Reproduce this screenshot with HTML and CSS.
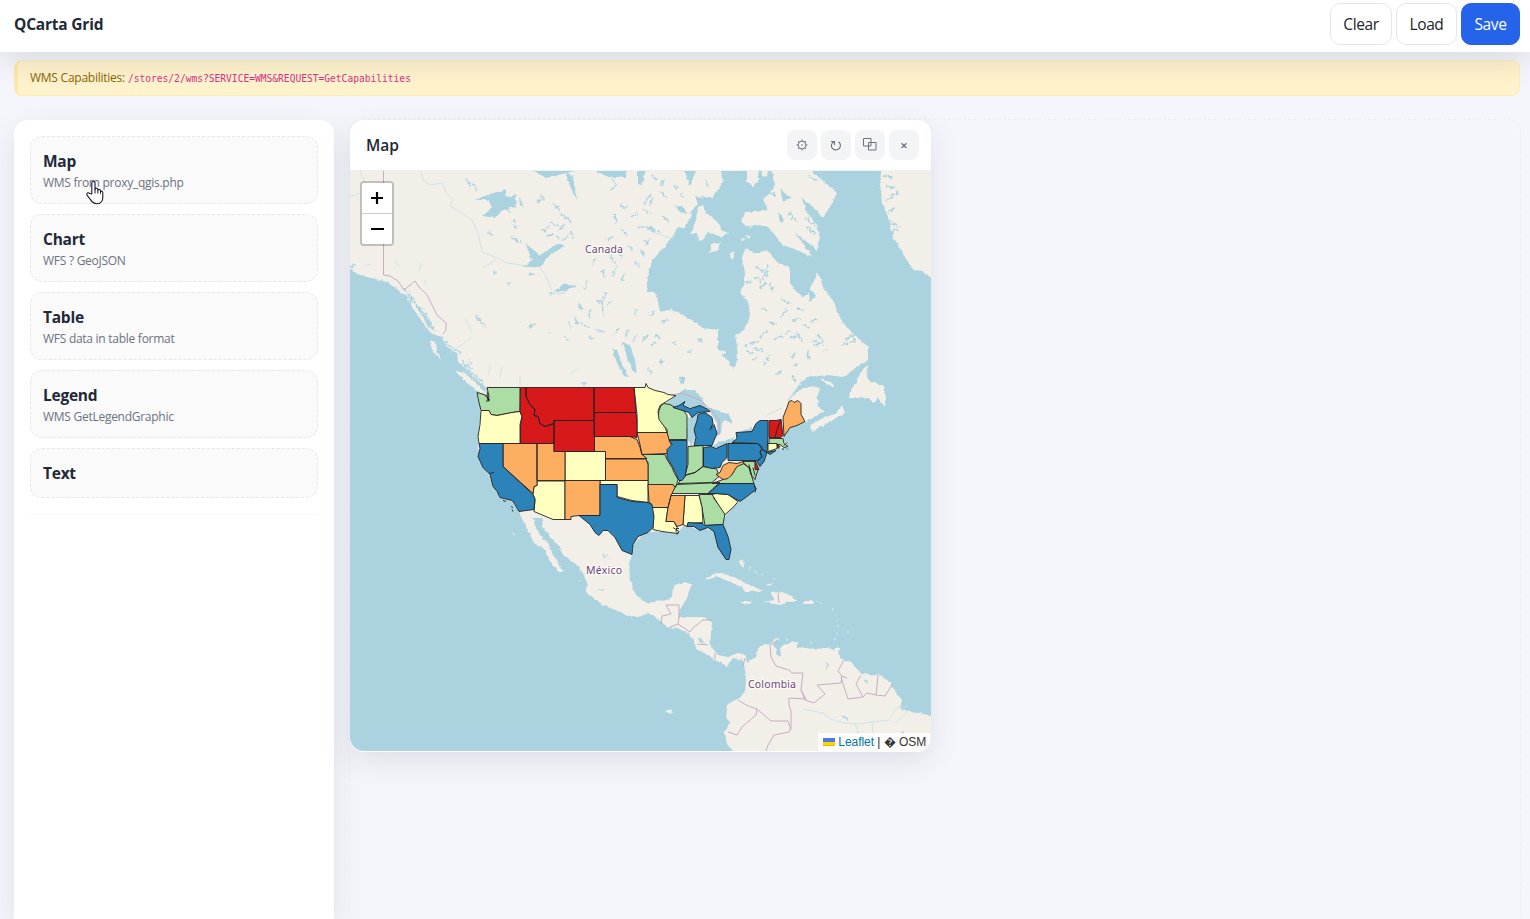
FILE: index.html
```html
<!DOCTYPE html>
<html lang="en">
<head>
<meta charset="utf-8">
<title>QCarta Grid</title>
<link rel="stylesheet" href="styles.css">
</head>
<body>
<header class="topbar">
  <h1 class="brand">QCarta Grid</h1>
  <div class="actions">
    <button class="btn btn-clear">Clear</button>
    <button class="btn btn-load">Load</button>
    <button class="btn btn-save">Save</button>
  </div>
</header>
<div class="notice"><span class="notice-label">WMS Capabilities:</span><code>/stores/2/wms?SERVICE=WMS&amp;REQUEST=GetCapabilities</code></div>
<main class="layout">
  <aside class="sidebar">
    <div class="tool"><b>Map</b><small>WMS from proxy_qgis.php</small>
      <svg class="cursor" width="20" height="26" viewBox="0 0 20 26"><path d="M6.8 14V3.2c0-2.3 3.2-2.3 3.2 0v6.1c.4-1.7 2.8-1.4 2.8.3v.8c.5-1.5 2.7-1.2 2.7.4v1c.6-1.2 2.3-.7 2.3.7v4.8c0 3.8-2.2 6.4-5.9 6.4-3.4 0-4.900-1.500-6.600-4.300L2 15.100c-1-1.800 1.100-3.100 2.500-1.600z" fill="#fff" stroke="#1b1b2b" stroke-width="1.1" stroke-linejoin="round"/><path d="M10 9v4.500M12.800 10.300v3.200M15.500 11.300v2.500" stroke="#1b1b2b" fill="none"/></svg>
    </div>
    <div class="tool"><b>Chart</b><small>WFS ? GeoJSON</small></div>
    <div class="tool"><b>Table</b><small>WFS data in table format</small></div>
    <div class="tool"><b>Legend</b><small>WMS GetLegendGraphic</small></div>
    <div class="tool"><b>Text</b></div>
    <hr class="rule">
  </aside>
  <section class="canvas">
    <article class="widget">
      <div class="widget-head">
        <h2>Map</h2>
        <div class="tools">
          <button class="icon"><svg width="14" height="14" viewBox="0 0 14 14" fill="none" stroke="#6b7280"><circle cx="7" cy="7" r="3.900"/><circle cx="7" cy="7" r=".4"/><path d="M7 1.500v1.600M7 10.900v1.600M1.500 7h1.600M10.900 7h1.600M3.100 3.100l1.100 1.100M9.800 9.800l1.100 1.100M3.100 10.900l1.100-1.100M9.800 4.200l1.100-1.100"/></svg></button>
          <button class="icon"><svg width="14" height="14" viewBox="0 0 14 14" fill="none" stroke="#6b7280" stroke-width="1.100"><path d="M2 3.500h3.500V7M5.200 3.700C2.500 5 1.700 7.500 2.900 9.700c1.500 2.700 5.500 3 7.500.6 1.600-2 1.300-5-.9-6.600"/></svg></button>
          <button class="icon"><svg width="14" height="14" viewBox="0 0 14 14" fill="none" stroke="#6b7280"><path d="M.5.500h7.500v7.500H.5zM5.500 4.500h7.500v7.500h-7.500z"/></svg></button>
          <button class="icon"><svg width="14" height="14" viewBox="0 0 14 14" fill="none" stroke="#6b7280" stroke-width="1.200"><path d="M4.500 5.200l5 4.800M9.500 5.200l-5 4.800"/></svg></button>
        </div>
      </div>
      <div class="map">
        <svg class="map-art" viewBox="350 171 581 580" width="581" height="580">
          <defs>
            <filter id="coast" filterUnits="userSpaceOnUse" x="340" y="160" width="601" height="601" color-interpolation-filters="sRGB">
              <feTurbulence type="fractalNoise" baseFrequency=".22" numOctaves="3" seed="4" result="n"/>
              <feDisplacementMap in="SourceGraphic" in2="n" scale="3.500" xChannelSelector="R" yChannelSelector="G"/>
            </filter>
            <filter id="jag" filterUnits="userSpaceOnUse" x="340" y="160" width="601" height="601" color-interpolation-filters="sRGB">
              <feTurbulence type="fractalNoise" baseFrequency=".3" numOctaves="3" seed="9" result="n"/>
              <feDisplacementMap in="SourceGraphic" in2="n" scale="6" xChannelSelector="R" yChannelSelector="G"/>
            </filter>
          </defs>
          <rect class="water" x="350" y="170" width="581" height="582"/>
          <g filter="url(#coast)">
            <!-- mainland -->
            <path class="land" d="M340 160V266L350 269 357 274 367 277 387 282 398 290 407 297 413 309 418 315 423 323 430 333 442 337 445 345 457 353 458 362 467 370 473 377 483 385 488 389 481 395 481 411 478 437 479 457 483 468 490 475 493 487 500 498 512 501 519 512 525 525 530 535 534 543 545 550 550 562 560 573 563 571 558 563 552 553 548 543 540 535 535 525 533 518 542 518 543 527 550 537 558 545 563 555 575 563 583 573 587 583 586 592 595 600 610 608 627 615 638 617 648 613 657 618 667 627 677 628 687 632 693 640 698 650 710 656 715 660 727 666 733 658 743 660 745 670 746 680 745 692 738 699 728 703 726 717 730 723 724 733 727 743 733 751V760H940V718L931 716 920 713 910 712 900 708 902 700 893 688 890 682 880 675 862 674 850 662 840 658 837 650 825 648 813 649 798 647 797 642 788 643 783 645 780 649 781 654 779 657 776 654 777 648 772 645 781 638 775 639 770 644 760 646 755 657 748 662 745 655 738 653 728 657 718 655 710 645 712 622 703 617 690 617 679 617 680 610 687 598 692 583 680 583 673 587 672 597 667 600 647 603 637 597 630 580 629 563 632 555 633 545 640 537 650 532 662 532 678 533 683 526 697 528 708 530 715 530 717 542 723 555 729 560 730 548 725 535 722 523 727 513 737 502 747 497 755 490 754 483 750 475 754 470 756 463 763 457 765 452 773 450 787 447 783 438 785 430 793 425 805 422 818 415 823 412 818 405 817 397 820 388 813 386 800 390 788 400 795 390 807 377 827 375 843 377 857 367 868 360 868 347 853 333 842 322 837 310 832 298 823 287 818 272 813 283 810 292 803 297 795 290 790 283 790 268 778 263 767 250 757 253 745 249 742 257 745 273 743 287 740 293 748 302 750 315 748 322 742 332 735 335 737 347 738 360 733 368 725 358 718 350 718 330 703 328 688 318 673 309 660 312 657 297 655 293 647 292 647 277 653 260 663 248 672 237 677 228 685 227 692 215 690 213 698 203 695 197 712 198 718 190 723 182 719 160Z"/>
            <!-- islands -->
            <path class="land" d="M456 372L463 372 473 380 485 392 480 393 467 383ZM429 340L436 342 437 352 441 360 433 352ZM698 207L703 205 705 213 712 217 720 225 721 230 728 233 722 237 708 232 703 240 699 241 698 233 691 235 695 223ZM712 244L720 243 718 250 710 253ZM729 253L733 250 734 257 732 260ZM769 160L775 185 770 193 763 200 768 210 755 212 745 212 742 222 747 227 760 225 768 227 773 233 783 245 797 250 812 257 803 243 795 233 807 242 817 250 820 237 817 225 807 213 802 198 813 207 823 217 830 207 837 193 825 182 807 168 800 160ZM747 160L747 182 753 186 758 182 759 160ZM762 170H768L767 177 762 176ZM882 160L880 183 882 203 888 217 893 237 902 252 913 270 923 271 931 278 940 280V160ZM868 365L862 370 853 387 848 398 858 398 870 398 873 403 878 398 885 407 886 397 882 385 870 382 867 377ZM810 425L813 432 827 423 845 413 842 405 837 413 825 417ZM820 379L833 383 834 387 827 385ZM705 580L712 574 722 573 733 577 743 582 763 591 745 592 743 587 733 583 718 577ZM740 601L748 601 752 603 745 605ZM770 592L787 593 797 601 789 602 780 605 763 602 775 600ZM804 601H813V604H804ZM740 239L745 238 744 241ZM745 235L750 236 748 239ZM738 562L744 560 744 568M728 560L731 562M665 710H671L673 713 668 713ZM718 350L726 351 725 354 719 353ZM835 648H840V650H835Z"/>
            <path class="isle" d="M833 610v.1M836 615v.1M837 621v.1M838 627v.1M837 634v.1M835 639v.1M847 632v.1M821 603v.1M817 602v.1M744 563l-2-3M750 567v2M755 571l2 2M762 574v1M768 585l3-1M774 578v.1M579 581v.1M513 534v.1M787 639v1M811 643v.1"/>
            <!-- large lakes and inlets -->
            <path class="water" d="M475 200L493 193 507 189 505 197 517 195 515 207 503 210 495 218 483 216 492 207 488 200ZM523 267L532 260 525 243 540 255 557 244 565 246 550 255 540 267ZM553 293L563 283 577 286 567 290ZM529 168H566L575 171 562 174 546 178ZM590 168H627L626 177 608 177ZM565 170L573 177 577 200 569 184ZM638 168H646L642 185 638 184ZM683 168L690 186 697 168ZM622 343L630 345 635 360 637 373 633 372 627 358ZM612 348L617 350 622 364 628 377 624 376 617 363ZM679 377L684 377 684 384 680 383ZM674 205L684 208 688 214 680 212ZM780 188L786 195 792 197 783 202ZM777 212L785 219 781 223ZM662 407L675 396 683 390 695 390 703 400 708 410 690 407 673 408ZM688 419L696 413 701 413 696 425 695 440 691 446 687 441ZM706 407L720 411 729 415 733 424 727 421 722 423 721 433 716 437 717 423 711 414ZM712 447L717 442 724 441 735 437 732 443 720 448ZM737 433L744 430 752 427 753 431 746 434ZM810 301L816 296 808 286ZM730 317L734 313 738 320 732 322ZM542 639L548 644ZM826 662L829 665 826 670ZM697 637L703 640 705 645 700 642Z"/>
          </g>
          <!-- small lakes -->
          <path class="lakes" filter="url(#jag)" d="M467 180l4 7M474 184l2 5M541 195l3 5M538 202l4-3M553 204l7 6M560 213l5 4M543 230l6-3M551 223l7 3M559 229l5-4M565 217l5 4M570 232l4 6M563 240l6-5M548 236l5-3M556 235l3 3M512 237l7 5M505 206l4 6M514 220l2 8M488 231l4 4M497 272l-3 2M510 282l-1 3M529 275l3-1M520 200l2 6M612 178l4 7M611 190l4-4M621 206l5 2M614 214l3 8M631 217l6-3M639 227l13 1M622 230l5 4M607 240l6-4M602 248l5 3M611 257l4 5M617 250l4 6M628 246l4 3M595 259l-2 6M603 271l2 6M616 267l-3 9M624 274l-2 7M635 262l4 5M641 250l3 6M644 241l4 2M587 281l-2 7M597 300l5 3M606 292l-3 9M579 305l3 5M591 310l-2 7M549 293l4 1M558 294l5-1M574 318l4 6M602 304l2 11M611 301l-4 3M583 324l6 4M568 322l3 5M548 332l3 1M529 327l5-2M589 337l4 1M565 337l3 3M596 330l7 2M619 328l-3 5M628 330l-2 6M636 336l-3 6M643 341l5-6M651 345l6-2M656 335l4 4M672 343l4 1M689 352l3-2M660 363l4-2M648 370l4 3M702 341l-4-2M637 309l-2 6M649 315l6-3M662 322l5-2M475 315l10 11M583 383h3M653 176l3 4M664 180l-2 6M661 192l5 5M675 186l3 4M652 199l-2 6M643 210l8 3M662 216l7 5M647 228l13 4M681 193l2 4M706 181l2 5M708 202l6 6M701 195l7 10M650 195l-5 8M650 239l-5 6M757 267l7 5M765 276l-5 7M759 288l7-5M768 266l-2 9M770 284l3 7M755 278l4 1M747 283l4-2M746 345l13-4M754 349l8 1M760 337l7-6M774 339l8-3M770 355l-6 10M790 338l6-2M797 333l5 8M813 340l9 4M818 335l5 7M814 346l7-3M826 350l-4 1M795 352l-2 6M808 350l1 9M794 366l3-2M770 322l5 2M781 316l6-6M793 320l6-2M804 325l5 3M811 322l6-3M788 331l-3 4M846 339l11-5M843 345l12-5M756 358l-4 2M748 352l5 1M781 372l-4 2M793 376l2 6M798 308l5 3M763 308l4 3M782 300l7 3M887 200l11-8M886 185l8 3M890 222l7 4M892 232l8-5M889 211l5-3M884 176l9 1M826 182l7 5M809 176l7 4M806 219l9 7M815 233l-8-6M789 213l7 8M765 190l10 5M843 716l4 3M865 680l2 2M902 732l1 3M599 590h5M603 556h5"/>
          <!-- rivers and fjords -->
          <path class="river" d="M421 171l2 9 7 5 12-2 4 9 7 8-3 6 10 6 12 8 6 13 4 19 15 6 10 5 22 3M537 265l8 9 7 16M483 268l13-8M350 197l9-4M360 171l5 12M371 264l-6 2M395 261l5 6M421 263l-2 8M424 280l3 6M465 319l7 13M449 354l22-16M489 375l1-11M458 363l10 2M500 378l2-12M520 386v-10M570 374l8-6M788 402l14-22M782 408l-15 7M650 231l24 8M803 709l20 4 8 6 12 4 15 1 14-2 18-2M872 722l1 14M890 717l8-10 10-1M855 723l4 12M840 743l8-7 11-4M868 735l4 5M908 712l-12 10"/>
          <path class="fjord" filter="url(#jag)" d="M404 288l7 11 7 8 6 10 5 10 6 4M410 291l3 11 10 9 6 14M415 305l12 10 5 12M421 313l13 17M444 341l9 8M447 344l14 10M461 360l11 9M463 364l14 14M472 374l12 10M468 358l4 7M350 268l6-4"/>
          <g class="border">
            <path d="M383.500 171V275L390 276 398 281 404 290 415 281 419 287 427 295 437 315 446 323 446 330 443 334M672 395L682 393 700 400 712 411 719 420 719 435M661 624L662 616 671 614 666 605H679V618M670 627L678 624 690 632 693 628 703 620 712 620M679 617L678 624M697 644L708 645M715 653V659M745 658L743 666M778 640L770 645 771 657 776 666 789 670 792 673H803L801 690 805 700 814 703 825 694 817 685 841 683 842 676 838 671 844 660M801 690L806 699 789 698 789 705 791 711 791 728 789 732 774 735 768 745 766 751M738 700L748 706 757 709 771 721 788 721 791 730M757 709L756 715 742 727 737 735 728 732M841 677L845 690 848 699 863 697 856 684 861 675M863 697L867 693 876 695 878 675M876 695L885 696 892 685M778 593L779 603M842 676L847 678"/>
          </g>
          <!-- states, grouped by fill class -->
          <g class="states" transform="translate(0 -.5)">
            <path class="green" d="M477 393L487 396 488 401 489 397 487 388H520V412L512 413 497 416 491 415 489 411 481 411 479 403ZM661 406L664 404 670 405 675 408 683 410 687 416 687 440H668L667 430 658 420 659 411ZM642 455H665L667 460 672 468 674 473 678 480 676 487 673 487V485H648V463ZM688 447L703 446V467L699 470 695 473 685 476 688 465ZM678 484L681 480 687 475 695 473 703 467 712 468 717 470 719 477 712 483ZM677 485L720 483 713 489 708 494H671ZM712 484L723 480 732 475 737 466 742 463 750 469 752 478 754 484ZM743 462H755L758 470 755 480 751 475 749 468 744 464ZM699 495H713L714 499 720 507 725 514 723 525 705 526 702 508ZM769 439H783L784 444 788 447 784 448 780 445H769Z"/>
            <path class="yellow" d="M481 411L489 411 491 415 497 416 512 413 520 412 522 417 520 425 520 444H479L478 437 480 425ZM565 452H605.500V481H565ZM537 481.500H565V520H553L534 512 535 500 533 495 534 487 537 486ZM600 481H648V503L632 501 617 497V485H600ZM634 388H645L646 384 648 388 655 391 664 393 668 395 676 396 660 406 658 412 659 420 665 428 667 433H637L637 415ZM685 496H699L702 508 703 523 688 524 687 527 683 525 684 510ZM712 495L716 494 728 495 738 502 734 507 725 515 719 506ZM652 508H668L666 522H674L677 528 676 532 678 534 670 533 662 532 653 530 653 517ZM768 444H777V449L768 452Z"/>
            <path class="orange" d="M503 444H537V486L534 487 533 494 503 467ZM537 444H554V452H565V481H537ZM565 481H600V516H579L571 517V520H565ZM594 437H630L637 440 640 448 642 455 647 459H605.500V452H594ZM605.500 459.500H646L648 465V481H605.500ZM637 433H667L669 440 672 447 667 454 642 455 640 445ZM648 485H673L675 488 671 496 668 508H652L651 504 649 503ZM671 496H685L684 510 683 525 677 527 674 522H666L668 508ZM716 475L720 473 723 466 727 464 729 463 737 464 743 462 744 464 737 467 732 475 728 479 723 480ZM783 418L787 408 789 402 792 401 794 403 798 401 801 404 801 415 805 422 797 426 790 428 784 437Z"/>
            <path class="red" d="M520.500 388H526V397L530 405 535 410 534 416 538 417 540 424 545 427 554 424V444H520.500V425L522 417 520 412ZM526 388H594V421H554V424L545 427 540 424 538 417 534 416 535 410 530 405 526 397ZM554 421H594.500V452H554ZM594 388H634L636 413H594ZM594 413H636L637 420V438L630 437H594ZM769 421H776L781 420 783 436 781 438H769ZM777 445L780 447 778 449ZM755 461L759 470 755 470Z"/>
            <path class="blue" d="M479 444H503V467L533 495 535 500 534 510 519 512 515 505 512 501 500 498 497 492 493 487 490 475 483 468 478 457 480 449ZM600 485H617V498L632 502 648 503 652 505 654 517 653 528 648 533 638 537 633 545 632 555 622 551 615 538 608 531 603 531 599 536 595 533 590 525 579 516H600ZM673 408L679 406 685 402 683 406 690 409 700 406 708 410 710 412 698 413 692 418 689 413ZM698 415L705 413 712 418 713 424 710 430 714 425 717 434 714 441 712 446H694L696 438 694 430 697 421ZM669 441H687V465L685 477 682 481 679 481 673 468 667 458 667 450 672 445ZM703.500 448L711 447 716 449 727 444V458L722 463 720 468 712 469 703.500 467ZM728 444H758L762 448 760 453 762 457 758 461H728ZM732 443L737 439 736 433 752 432 756 424 760 421H768V437L767 453 762 449 758 444ZM762 450L767 453 764 462 760 467 757 462 762 457 760 453ZM767 453L776 451 770 455ZM720 484H754L756 490 747 497 740 502 728 495 716 494 708 494ZM688 523L703 524 705 526 723 525 728 537 731 550 729 560 726 560 718 548 714 532 708 528 700 531 694 527 687 527Z"/>
            <path class="line" d="M775 438L777 430 781 420M485 396l4 4M487 392l2 10M486 402l4-2M503 501l3 1M511 507l2 1M512 510l1 2M489 474l5-1M749 465l2 10M753 468l2 8M784 446l3-3M782 449l2 1M787 449l1 1M673 528l6 4-2 3M676 529l3 0M754 486l2 3-1 4"/>
          </g>
          <g class="label">
            <text x="604" y="253" textLength="38">Canada</text>
            <text x="604" y="574" textLength="36">México</text>
            <text x="772" y="688" textLength="48">Colombia</text>
          </g>
        </svg>
        <div class="zoom">
          <button><svg width="14" height="14" viewBox="0 0 14 14"><path d="M1 7h12M7 1v12" stroke="#000" stroke-width="2.200"/></svg></button>
          <button><svg width="14" height="14" viewBox="0 0 14 14"><path d="M1 7h13" stroke="#000" stroke-width="2"/></svg></button>
        </div>
        <div class="credit"><svg width="12" height="8" viewBox="0 0 12 8"><path fill="#4c7be1" d="M0 0h12v4H0z"/><path fill="#ffd500" d="M0 4h12v3H0z"/><path fill="#e0bc00" d="M0 7h12v1H0z"/></svg> <a>Leaflet</a> | <span class="unknown">�</span> OSM</div>
      </div>
    </article>
  </section>
</main>
</body>
</html>
```
FILE: styles.css
```css
* { box-sizing: border-box; }
body {
  margin: 0;
  height: 919px;
  overflow: hidden;
  display: flex;
  flex-direction: column;
  background: #f5f6fb;
  color: #1f2937;
  font: 15.500px/24px "Open Sans", "Noto Sans", sans-serif;
}
button { font: inherit; margin: 0; cursor: pointer; }
h1, h2 { margin: 0; }

.topbar {
  flex: none;
  height: 52px;
  padding: 3px 10px 7px 14px;
  display: flex;
  align-items: center;
  justify-content: space-between;
  background: #fff;
  box-shadow: 0 10px 30px rgba(31, 41, 55, .12);
  position: relative;
  z-index: 2;
}
.brand { font-size: 15.500px; font-weight: 700; letter-spacing: -.2px; }
.actions { display: flex; gap: 4px; }
.btn {
  height: 42px;
  padding: 0;
  border: 1px solid #e5e7eb;
  border-radius: 10px;
  background: #fff;
  color: #212529;
  letter-spacing: -.4px;
}
.btn-clear { width: 62px; }
.btn-load { width: 61px; }
.btn-save { width: 59px; background: #2563eb; border-color: #2563eb; color: #fff; }

.notice {
  flex: none;
  height: 36px;
  margin: 8px 10px 0 14px;
  padding: 0 12px;
  display: flex;
  align-items: center;
  gap: 3px;
  background: #fff3cd;
  border: 1px solid #ffecb5;
  border-left: 4px solid #ffe8ab;
  border-radius: 8px;
  color: #8a6800;
  font-size: 12px;
}
.notice-label { letter-spacing: -.25px; }
.notice code { color: #d63384; font: 9.6px "DejaVu Sans Mono", monospace; }

.layout { flex: 1; min-height: 0; display: flex; gap: 15px; padding: 23px 9px 0 14px; }
.sidebar {
  flex: none;
  width: 320px;
  margin-top: 1px;
  padding: 16px;
  display: flex;
  flex-direction: column;
  gap: 10px;
  background: #fff;
  border-radius: 14px 14px 0 0;
  box-shadow: 0 10px 30px rgba(31, 41, 55, .1);
}
.tool {
  position: relative;
  padding: 12px;
  border: 1px dashed #e5e7eb;
  border-radius: 12px;
  background: #fafafa;
  display: flex;
  flex-direction: column;
}
.tool b { font-weight: 700; height: 24px; letter-spacing: -.25px; }
.tool small { font-size: 12px; line-height: 20px; height: 18px; color: #6b7280; letter-spacing: -.27px; }
.cursor { position: absolute; left: 54px; top: 43px; }
.rule { width: 100%; margin: 6px 0 0; border: 0; border-top: 1px solid #f8f8f9; }

.canvas { flex: 1; border: 1px dashed #eceef2; border-bottom: 0; border-radius: 14px 14px 0 0; }
.widget {
  width: 581px;
  height: 632px;
  background: #fff;
  border-radius: 14px;
  overflow: hidden;
  box-shadow: 0 10px 30px rgba(31, 41, 55, .1);
}
.widget-head {
  height: 51px;
  padding: 0 12px 0 16px;
  border-bottom: 1px solid #eceef0;
  display: flex;
  align-items: center;
  justify-content: space-between;
}
.widget-head h2 { font-size: 15.500px; font-weight: 600; }
.tools { display: flex; gap: 4px; }
.icon {
  width: 30px;
  height: 30px;
  padding: 0;
  border: 0;
  border-radius: 8px;
  background: #f3f4f6;
  display: grid;
  place-items: center;
}

.map { position: relative; height: 580px; border-radius: 0 0 14px 14px; overflow: hidden; }
.map-art { display: block; }
.water { fill: #aad3df; }
.land { fill: #f2efe9; }
.isle { stroke: #f2efe9; stroke-width: 1.500; stroke-linecap: round; fill: none; }
.lakes { stroke: #aad3df; stroke-width: 1.600; stroke-linecap: round; fill: none; }
.river { stroke: #c6dfe4; stroke-width: .8; fill: none; }
.fjord { stroke: #aad3df; stroke-width: 1.300; fill: none; }
.border { stroke: #c3a5be; stroke-width: .9; fill: none; }
.states { stroke: #232323; stroke-width: .9; stroke-linejoin: round; }
.green { fill: #abdda4; }
.yellow { fill: #ffffbf; }
.orange { fill: #fdae61; }
.red { fill: #d7191c; }
.blue { fill: #2b83ba; }
.line { fill: none; }
.label text {
  font: 10.500px "Noto Sans", sans-serif;
  text-anchor: middle;
  fill: #6c4675;
  stroke: #fbf9f7;
  stroke-width: 2.500px;
  stroke-linejoin: round;
  paint-order: stroke;
}
.zoom {
  position: absolute;
  left: 10px;
  top: 10px;
  width: 34px;
  border: 2px solid rgba(0, 0, 0, .2);
  border-radius: 4px;
  background-clip: padding-box;
}
.zoom button {
  display: grid;
  place-items: center;
  width: 30px;
  height: 30px;
  padding: 0;
  border: 0;
  background: #fff;
  border-radius: 0 0 2px 2px;
}
.zoom button:first-child { height: 31px; border-bottom: 1px solid #ccc; border-radius: 2px 2px 0 0; }
.zoom button:last-child { padding-bottom: 1px; }
.credit {
  position: absolute;
  right: 0;
  bottom: 0;
  width: 113px;
  height: 18px;
  padding: 0 5px;
  background: rgba(255, 255, 255, .8);
  color: #333;
  font: 12px/18px "Liberation Sans", Arial, sans-serif;
  letter-spacing: -.04px;
  white-space: nowrap;
}
.credit a { color: #0078a8; }
```
